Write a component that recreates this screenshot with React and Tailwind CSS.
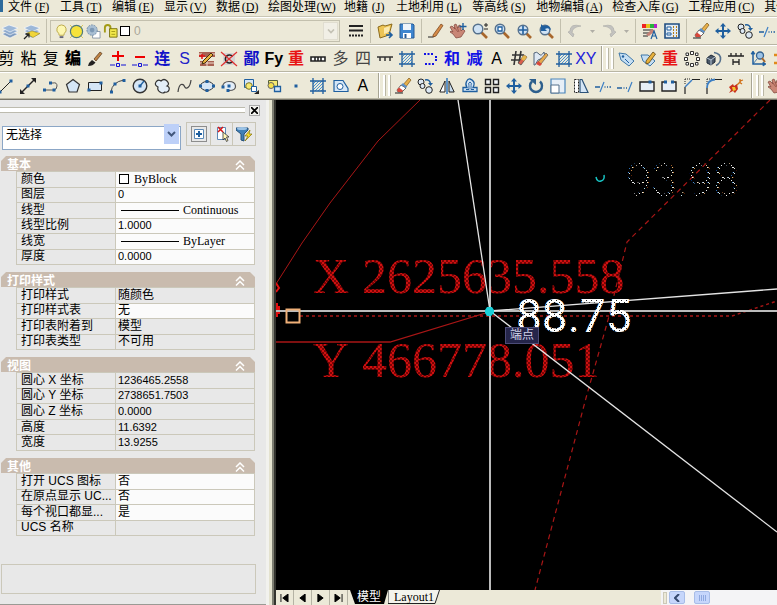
import React, { useState } from "react";

const menus = [
  ["文件", "F"],
  ["工具", "T"],
  ["编辑", "E"],
  ["显示", "V"],
  ["数据", "D"],
  ["绘图处理", "W"],
  ["地籍", "J"],
  ["土地利用", "L"],
  ["等高线", "S"],
  ["地物编辑", "A"],
  ["检查入库", "G"],
  ["工程应用", "C"],
  ["其他", "M"],
];

const B = "#1f5f9f";
const K = "#222";

// small square node used by most of the drawing tools
function Dot({ x, y }) {
  return <rect x={x - 1.5} y={y - 1.5} width="3" height="3" fill={B} />;
}

function Lens({ x = 6, y = 6, children }) {
  return (
    <>
      <path d={`M${x + 3.5} ${y + 3.5}L15 15`} stroke="#a8672c" strokeWidth="2.6" />
      <circle cx={x} cy={y} r="4.8" fill="#cfe2f4" stroke="#55708c" strokeWidth="1.4" />
      {children}
    </>
  );
}

const hatch = (
  <>
    <path d="M3 6L6 3M3 9L9 3M3 12L12 3M5 13L13 5M8 13L13 8M11 13L13 11" stroke="#4d93d0" />
    <path d="M0 3h16M0 13h16M3 0v16M13 0v16" stroke={B} strokeWidth="1.3" />
  </>
);
const eraser = (
  <>
    <path d="M0 15h8" stroke={K} />
    <path d="M7 8L14 0L16 2L10 10z" fill="#e8b04a" stroke="#7a5418" strokeWidth=".7" />
    <path d="M2 12L6 7L11 10L7 14H3z" fill="#fff" stroke="#444" strokeWidth=".8" />
    <path d="M2 12L4 9.500L8 12.500L7 14H3z" fill="#d9483b" />
    <path d="M6 7L8 5L12 8.500L11 10z" fill="#5b8fc8" />
  </>
);
const move = (
  <path
    d="M8 0l3 3.500H9V7h3.500V5L16 8l-3.500 3V9H9v3.500h2L8 16l-3-3.500h2V9H3.500v2L0 8l3.500-3v2H7V3.500H5z"
    fill={B}
  />
);
const copy = (
  <>
    <circle cx="4" cy="4" r="3" fill="#dce8f4" stroke={K} />
    <circle cx="5.500" cy="8" r="2.500" fill="#dce8f4" stroke={K} />
    <circle cx="12" cy="12" r="3.300" fill="#dce8f4" stroke={K} />
    <path d="M8 2q5-1 5.500 4" stroke={B} strokeWidth="1.500" fill="none" />
    <path d="M11 5h5l-2.500 3z" fill={B} />
  </>
);
const trim = (
  <>
    <path d="M0 9h5M12 9h1M14.500 9h1.500M9.500 9h1" stroke={B} strokeWidth="1.500" />
    <path d="M5 14L9 4" stroke="#3c7fc4" strokeWidth="1.200" />
  </>
);
const hand = (
  <>
    <path d="M2 3l3 3L4 2l2-1 2 4 1-3 2 1v5l2-2 2 2-4 6-5 1-3-4-3-2 1-1 2 1-3-5z" fill="#c98676" stroke="#7d4238" strokeWidth=".7" />
    <path d="M4 4l4 5M7 4l2 5" stroke="#8d4c42" strokeWidth=".7" />
  </>
);
const brush = (
  <>
    <path d="M7 8L13 1l2 1.500L9 10z" fill="#c08444" stroke="#53351a" strokeWidth=".7" />
    <path d="M1 15q1-4 4-6l3.500 2.500Q6 15 1 15z" fill="#222" />
  </>
);
const layers = (
  <>
    <path d="M0 11l7-3 9 3-8 4z" fill="#7f9cc0" stroke="#fff" strokeWidth=".6" />
    <path d="M0 8l7-3 9 3-8 4z" fill="#8eaacd" stroke="#fff" strokeWidth=".6" />
    <path d="M0 5l7-3 9 3-8 4z" fill="#9db8d8" stroke="#fff" strokeWidth=".6" />
  </>
);

const icons = {
  layers,
  layersPrev: (
    <>
      {layers}
      <path d="M2 10.500l6-2.500 8 2.500-7 4z" fill="#f0d53a" stroke="#8a7a14" strokeWidth=".5" />
      <path d="M0 16l5-5M1.500 11H5v3.500" stroke={K} strokeWidth="1.300" fill="none" />
    </>
  ),
  bulb: (
    <>
      <path d="M8 1a5 5 0 0 1 3 9l-.5 2h-5L5 10a5 5 0 0 1 3-9z" fill="#fdf7b0" stroke="#b9a64a" />
      <path d="M6 13h4v2H6z" fill="#667" />
    </>
  ),
  sun: (
    <>
      <path d="M1 1l3 3M15 1l-3 3M1 15l3-3M15 15l-3-3" stroke="#d7c64d" />
      <circle cx="8" cy="8" r="6.500" fill="#f6e33a" stroke="#4f7a7c" strokeWidth="1.300" />
    </>
  ),
  freeze: (
    <>
      <path d="M7 8h8v7H7z" fill="#fff" stroke="#8a98a8" />
      <circle cx="6.500" cy="6.500" r="5.500" fill="#a9bfd3" stroke="#6f8ba6" strokeDasharray="2 1" />
      <circle cx="6.500" cy="6.500" r="2.500" fill="#7d99b5" />
    </>
  ),
  lock: (
    <>
      <path d="M2 9V4q0-3 3-3t3 3v4" fill="none" stroke="#a39b16" strokeWidth="2" />
      <path d="M7 5h8v9H7z" fill="#f2e84a" stroke="#77700e" />
      <path d="M9 8h4M9 11h4" stroke="#a39b16" />
    </>
  ),
  lines: <path d="M1 3h14M1 7.500h14M1 12.500h2M4 12.500h2M7 12.500h2M10 12.500h2M13 12.500h2" stroke={K} strokeWidth="2" />,
  folder: (
    <>
      <path d="M1 4l5-2 2 1 7-2-3 11-9 3z" fill="#edc455" stroke="#8b6a1c" />
      <path d="M7 5l6-2-1 6-5 2z" fill="#fbe9ae" />
      <path d="M9 12h6M12 9l3 3-3 3" stroke={B} strokeWidth="1.600" fill="none" />
    </>
  ),
  save: (
    <>
      <path d="M1 1h13l1 1v13H1z" fill="#3f86cf" stroke="#265a96" />
      <path d="M4 1h8v6H4z" fill="#eef4fa" />
      <path d="M4 10h8v5H4z" fill="#fff" />
      <path d="M5.500 11h2v4h-2z" fill="#265a96" />
    </>
  ),
  pencil: (
    <>
      <path d="M0 14h5l3-2" stroke={K} fill="none" />
      <path d="M5 12L13 1l2 1.500L8 13l-3 1z" fill="#d58b49" stroke="#703e16" strokeWidth=".7" />
    </>
  ),
  pan: (
    <>
      {hand}
      <path d="M13 0v7M9.500 3.500h7" stroke={B} strokeWidth="1.400" />
    </>
  ),
  hand,
  zoomRt: (
    <>
      <Lens />
      <path d="M12 2h4M14 0v4M12 6h4" stroke={K} />
    </>
  ),
  zoomWin: <Lens><path d="M4 4h4v4H4z" fill="#fff" stroke={B} strokeWidth="1.300" /></Lens>,
  zoomAll: <Lens x={7} y={7}><path d="M7 3v8M3 7h8" stroke={B} strokeWidth="1.600" /></Lens>,
  zoomPrev: (
    <>
      <Lens x={7} y={7} />
      <path d="M3 1v7h6L7 6q3-2 6 1-1-6-8-4z" fill={B} />
    </>
  ),
  undo: <path d="M1 9l5 5 1-3-2-1q0-6 9-7Q3 0 3 8z" fill="#c3c2bf" stroke="#aaa9a6" strokeWidth=".6" />,
  redo: <path d="M15 9l-5 5-1-3 2-1q0-6-9-7 11-3 11 5z" fill="#c3c2bf" stroke="#aaa9a6" strokeWidth=".6" />,
  props: (
    <>
      <path d="M0 1h4v4H0z" fill="#e22" />
      <path d="M4 1h4v4H4z" fill="#e2c51c" />
      <path d="M8 1h4v4H8z" fill="#25b43b" />
      <path d="M12 1h3v4h-3z" fill="#b321c9" />
      <path d="M1 7h10M1 10h6M1 13h5" stroke={K} />
      <path d="M4 12l6-6 3 2-6 5z" fill="#c78176" />
      <path d="M9 16l3-8 3 8M10 13h4" stroke={B} strokeWidth="1.200" fill="none" />
    </>
  ),
  center: (
    <>
      <path d="M1 1h14v14H1z" fill="#dfeaf4" stroke="#1f4d80" strokeWidth="1.600" />
      <path d="M3 4h4v3H3zM3 10h4v2H3z" fill="#fff" stroke={B} />
      <path d="M9 4h1M12 4h1M9 7h1M12 7h1M9 10h1M12 10h1M9 13h1M12 13h1" stroke="#b67e16" strokeWidth="1.800" />
    </>
  ),
  eraser,
  move,
  copy,
  trim,
  brush,
  plus: (
    <>
      <path d="M8 0v10M2 5h12" stroke="#e00" strokeWidth="2" />
      <path d="M0 14h5M11 14h5" stroke="#1111d6" />
      <path d="M6.500 12.500h3v3h-3z" fill="none" stroke="#1111d6" />
    </>
  ),
  minus: (
    <>
      <path d="M3 6h10" stroke="#e00" strokeWidth="2" />
      <path d="M0 14h5M11 14h5" stroke="#1111d6" />
      <path d="M6.500 12.500h3v3h-3z" fill="none" stroke="#1111d6" />
    </>
  ),
  brick: (
    <>
      <path d="M0 1h16v5H0zM1 10h14v5H1z" fill="#a86152" />
      <path d="M0 3h3M13 3h3M8 10v5M1 12h14" stroke="#f0ded0" />
      <path d="M4 10L12 2l2 2-8 8-3 1z" fill="#e8b23d" stroke="#443010" />
      <path d="M0 5h6M3 3v5" stroke="#e01414" strokeWidth="1.500" />
    </>
  ),
  crossC: (
    <>
      <path d="M2 2h12v12H2z" fill="#d4d4d4" />
      <path d="M11.500 5.500A4 4 0 1 0 11.500 10.500" fill="none" stroke={K} strokeWidth="1.600" />
      <path d="M0 1l16 14M16 1L0 15" stroke="#e03030" strokeWidth="1.200" />
    </>
  ),
  scale: <path d="M1 6h14v4H1zM5 6v4M8 6v4M11 6v4" fill="#fff" stroke={K} strokeWidth="1.600" />,
  comb: <path d="M0 6h16M3 6v4M8 6v4M13 6v4" stroke="#333" strokeWidth="1.500" />,
  hatch,
  dotArrow: (
    <>
      <path d="M2 3h9M3 13h9" stroke="#1111e6" strokeWidth="2" strokeDasharray="2 1.500" />
      <path d="M14 5v6" stroke="#1111e6" strokeWidth="2" strokeDasharray="2 1" />
    </>
  ),
  hashPen: (
    <>
      <path d="M1 4h12M0 9h11M5 0L3 14M10 0L8 12" stroke="#333" strokeWidth="1.600" />
      <path d="M7 12l6-8 3 2-6 8z" fill="#d9604e" stroke="#444" strokeWidth=".7" />
      <path d="M10 8l3-4 3 2-3 4z" fill="#e6b84c" />
    </>
  ),
  polyPen: (
    <>
      <path d="M1 2q3-2 5 1t5-2l1 5-7 3-3 5H1z" fill="#dfe9f4" stroke="#53657a" />
      <path d="M5 11l8-9 2 2-7 9z" fill="#e6a84c" stroke="#555" strokeWidth=".7" />
      <path d="M3 13l2-3 4 3-2 2z" fill="#d9483b" />
    </>
  ),
  tag: (
    <>
      <path d="M1 2l7 1 8 7-5 5-8-6z" fill="#c5def2" stroke="#3f77a8" />
      <circle cx="5" cy="5.500" r="1.200" fill={B} />
      <path d="M7 8l4 4" stroke={B} />
    </>
  ),
  tagPen: (
    <>
      <path d="M1 4l7 0 7 6-5 5-7-5z" fill="#c5def2" stroke="#3f77a8" />
      <path d="M6 10l7-9 2.500 2L9 12l-3 1z" fill="#e8b23d" stroke="#5b4414" strokeWidth=".8" />
    </>
  ),
  ring: (
    <path d="M6.500.5h3v3h-3zM6.500 12.500h3v3h-3zM.5 6.500h3v3h-3zM12.500 6.500h3v3h-3zM2 2h2.500v2.500H2zM11.500 2H14v2.500h-2.500zM2 11.500h2.500V14H2zM11.500 11.500H14V14h-2.500z" fill="#fff" stroke="#333" />
  ),
  orbit: (
    <>
      <path d="M1 7l4-3 4 2v5l-4 3-4-2z" fill="#4b5868" stroke="#1d2836" />
      <path d="M1 7l4 2v5M5 9l4-3" stroke="#b8c8d8" fill="none" />
      <path d="M8 1.500q7 1 6.500 7-.5 4-4.500 6" fill="none" stroke="#55708c" strokeWidth="1.600" />
    </>
  ),
  span: <path d="M0 5h16M3 2v3M8 2v3M13 2v3M5 8v6M11 8v6M5 11h6" stroke={K} strokeWidth="1.300" fill="none" />,
  axes: (
    <>
      <path d="M3 1v12h12" stroke={B} strokeWidth="1.500" fill="none" />
      <path d="M1 3l2-3 2 3zM13 11l3 2-3 2zM3 13l4-5" fill={B} stroke={B} strokeWidth=".8" />
      <circle cx="10" cy="4.500" r="3.500" fill="#9cc3e6" stroke="#34618e" strokeWidth="1.300" />
      <path d="M12 7l3 4" stroke="#a8672c" strokeWidth="2" />
    </>
  ),
  list: <path d="M2 4h10M2 12h10" stroke="#e08a1c" strokeWidth="2.500" />,
  line: (
    <>
      <path d="M2 14L13 3" stroke={K} />
      <Dot x={2} y={14} />
      <Dot x={13} y={3} />
    </>
  ),
  xline: (
    <>
      <path d="M2 14L14 2" stroke={K} strokeWidth="1.400" />
      <path d="M0 16v-5l5 5zM16 0v5l-5-5z" fill={K} />
      <Dot x={8} y={8} />
    </>
  ),
  pline: (
    <>
      <path d="M1 12h9q4 0 4-4t-4-3H7" fill="none" stroke="#555" />
      <Dot x={1.500} y={12} />
      <Dot x={11} y={12} />
      <Dot x={7.500} y={5} />
    </>
  ),
  polygon: <path d="M8 1.500l6.500 5L12 14H4L1.500 6.500z" fill="#d5e6f6" stroke="#333" strokeWidth="1.200" />,
  rect: (
    <>
      <path d="M1.500 4.500h13v8h-13z" fill="#d5e6f6" stroke={K} />
      <Dot x={2} y={12} />
      <Dot x={14} y={5} />
    </>
  ),
  arc: (
    <>
      <path d="M1 14Q2 4 14 2" fill="none" stroke="#444" />
      <Dot x={1.500} y={14} />
      <Dot x={5} y={6} />
      <Dot x={14} y={2.500} />
    </>
  ),
  circle: (
    <>
      <circle cx="8" cy="8" r="6.800" fill="#d5e6f6" stroke="#333" strokeWidth="1.400" />
      <path d="M8 8l4-5" stroke={B} strokeWidth="1.300" />
      <Dot x={8} y={8} />
    </>
  ),
  cloud: (
    <path d="M4 9q-4-2-2-5t5-1q3-3 6 0t0 5q3 1 2 4t-4 2q-2 2-5 0t-2-5z" fill="#e3eef8" stroke="#333" strokeWidth="1.200" />
  ),
  spline: <path d="M1 14C2 5 6 5 7.500 8.500S13 10 14 2" fill="none" stroke="#444" strokeWidth="1.200" />,
  ellipse: (
    <>
      <ellipse cx="8" cy="8" rx="6.500" ry="4.500" fill="#d5e6f6" stroke="#333" />
      <Dot x={1.500} y={8} />
      <Dot x={14.500} y={8} />
      <Dot x={8} y={3.500} />
      <Dot x={8} y={12.500} />
    </>
  ),
  earc: (
    <>
      <path d="M1.500 9Q2 3.500 8 3.500T14.500 8 8 12.500" fill="#e3eef8" stroke="#555" strokeWidth="1.200" />
      <Dot x={2} y={9} />
      <Dot x={8} y={8} />
      <Dot x={7} y={12.500} />
    </>
  ),
  insert: (
    <>
      <path d="M1.500 1.500h9v8h-9z" fill="#d5e6f6" stroke={B} />
      <circle cx="6" cy="8" r="3.300" fill="#f6ea72" stroke="#7a7228" />
      <path d="M8.500 8.500h5v5h-5z" fill="#fff" stroke={B} />
      <path d="M11 16l5-4v4z" fill={K} />
    </>
  ),
  block: (
    <>
      <path d="M2.500 2.500h9v6h-9z" fill="#f6ea72" stroke="#55603c" />
      <circle cx="5" cy="7.500" r="3" fill="#f3e04c" stroke="#666" />
      <path d="M8.500 8.500h6v5h-6z" fill="#d5e6f6" stroke={B} strokeWidth="1.300" />
    </>
  ),
  point: <Dot x={8} y={8} />,
  region: (
    <>
      <path d="M1 2.500h9l5 8v3H1z" fill="#d5e6f6" stroke={B} strokeWidth="1.200" />
      <circle cx="7" cy="8.500" r="3" fill="#fff" stroke={B} />
    </>
  ),
  mirror: (
    <>
      <path d="M8 0v16" stroke="#3c7fc4" strokeWidth="1.600" />
      <path d="M6 3v11H.8z" fill="#fff" stroke={K} />
      <path d="M10 3v11h5.200z" fill="#c9dced" stroke={K} />
    </>
  ),
  offset: (
    <>
      <path d="M1 13.500v-4h4q-2-3-.5-6T8 1t3.500 2.500-.5 6h4v4z" fill="#d5e6f6" stroke={B} strokeWidth="1.300" />
      <path d="M4 11.500h3V7.500q-1-3 1-3.500 2 .5 1 3.500v4h3" stroke={B} fill="#f6f8fa" />
    </>
  ),
  array: <path d="M1.500 1.500h5v5h-5zM9.500 1.500h5v5h-5zM1.500 9.500h5v5h-5zM9.500 9.500h5v5h-5z" fill="#f3f6f8" stroke={K} strokeWidth="1.400" />,
  rotate: (
    <>
      <path d="M4 3.500A6 6 0 1 0 12 3.500" fill="none" stroke="#2d5f8d" strokeWidth="2.400" />
      <path d="M1 1h7v6z" fill="#2d5f8d" />
    </>
  ),
  resize: (
    <>
      <path d="M1 1h14v14H1z" fill="#e7eff7" stroke="#4b86bb" strokeWidth="1.200" />
      <path d="M1 7h8v8H1z" fill="#fff" stroke="#55708c" />
    </>
  ),
  stretch: (
    <>
      <path d="M1.500 1.500h4v13h-4z" fill="#fff" stroke={K} strokeDasharray="2 1" />
      <path d="M7 1.500h2l6 13H7z" fill="#d5e6f6" stroke="#2c5278" strokeWidth="1.200" />
    </>
  ),
  extend: (
    <>
      <path d="M0 10h5M6.500 10h1M9 10h1" stroke={B} strokeWidth="1.500" />
      <path d="M11 14L15 4" stroke="#3c7fc4" strokeWidth="1.200" />
    </>
  ),
  breakPt: (
    <>
      <path d="M1 4h14v9H1z" fill="#e7eff7" stroke={K} strokeWidth="1.400" />
      <Dot x={11} y={4} />
    </>
  ),
  breakGap: (
    <>
      <path d="M4 4H1v9h14V4h-3" fill="#e7eff7" stroke={K} strokeWidth="1.400" />
      <Dot x={4.500} y={4} />
      <Dot x={11.500} y={4} />
    </>
  ),
  chamfer: (
    <>
      <path d="M1 16V9M8 1.500h8" stroke={K} strokeWidth="1.200" />
      <path d="M1 1h6M1 1v6" stroke={K} strokeDasharray="1 1" />
      <path d="M1 9l7-7" stroke="#3c7fc4" strokeWidth="1.400" />
    </>
  ),
  fillet: (
    <>
      <path d="M1 16V10M9 1.500h7" stroke={K} strokeWidth="1.200" />
      <path d="M1 1h6M1 1v6" stroke={K} strokeDasharray="1 1" />
      <path d="M1 10q0-8 8-8.500" stroke="#3c7fc4" strokeWidth="1.800" fill="none" />
    </>
  ),
  explode: (
    <>
      <path d="M1 9l4-3 1 2 3-2 1 5-3 4-2-2-4 2 2-3z" fill="#c9301c" />
      <path d="M4 9l3 0 1 3-3 1z" fill="#f2c52c" />
      <path d="M9 7l4-4M12 1v3M15 2l-3 1M14 6l-3-2" stroke="#d07018" strokeWidth="1.300" />
    </>
  ),
};

const row2 = [
  { t: "剪" }, { t: "粘" }, { t: "复" },
  { t: "编", c: "font-black" },
  "brush", "plus", "minus",
  { t: "连", c: "text-[#1111c8] font-bold" },
  { t: "S", c: "text-[#2222c8]" },
  "brick", "crossC",
  { t: "鄙", c: "text-[#1111c8] font-bold" },
  { t: "Fy", c: "font-black" },
  { t: "重", c: "text-[#e81414] font-bold" },
  "scale",
  { t: "多", c: "text-[#444]" },
  { t: "四", c: "text-[#444]" },
  "comb", "hatch", "dotArrow",
  { t: "和", c: "text-[#1111e6] font-bold" },
  { t: "减", c: "text-[#1111e6] font-bold" },
  { t: "A" },
  "hashPen", "polyPen", "hatch",
  { t: "XY", c: "text-[#2222d8]" },
];
const row2b = ["tag", "tagPen", { t: "重", c: "text-[#e81414] font-bold" }, "ring", "orbit", "span", "axes", "list"];
const row3 = [
  "line", "xline", "pline", "polygon", "rect", "arc", "circle", "cloud", "spline",
  "ellipse", "earc", "insert", "block", "point", "hatch", "region", { t: "A" },
];
const row3b = [
  "eraser", "copy", "mirror", "offset", "array", "move", "rotate", "resize",
  "stretch", "trim", "extend", "breakPt", "breakGap", "chamfer", "fillet", "explode",
];

const sections = [
  {
    title: "基本",
    height: "h-[94px]",
    rows: [
      ["颜色", "ByBlock", true, "swatch"],
      ["图层", "0", true],
      ["线型", "Continuous", true, "line"],
      ["线型比例", "1.0000", true],
      ["线宽", "ByLayer", true, "line"],
      ["厚度", "0.0000", true],
    ],
  },
  {
    title: "打印样式",
    height: "h-[63px]",
    rows: [
      ["打印样式", "随颜色", false],
      ["打印样式表", "无", true],
      ["打印表附着到", "模型", false],
      ["打印表类型", "不可用", false],
    ],
  },
  {
    title: "视图",
    height: "h-[79px]",
    rows: [
      ["圆心 X 坐标", "1236465.2558", false],
      ["圆心 Y 坐标", "2738651.7503", false],
      ["圆心 Z 坐标", "0.0000", false],
      ["高度", "11.6392", false],
      ["宽度", "13.9255", false],
    ],
  },
  {
    title: "其他",
    height: "h-[63px]",
    rows: [
      ["打开 UCS 图标", "否", true],
      ["在原点显示 UC...", "否", true],
      ["每个视口都显...", "是", true],
      ["UCS 名称", "", false],
    ],
  },
];

function Icon({ name, size = 16 }) {
  return (
    <svg width={size} height={size} viewBox="0 0 16 16" fill="none" className="shrink-0 overflow-visible">
      {icons[name]}
    </svg>
  );
}

function Tool({ item, grow }) {
  const isText = typeof item !== "string";
  return (
    <button
      aria-label={isText ? item.t : item}
      className={`flex h-6 items-center justify-center ${grow ? "min-w-0 flex-1" : "w-[22px] shrink-0"}`}
    >
      {isText ? (
        <span className={`whitespace-nowrap text-[16px] leading-5 ${item.c || ""}`}>{item.t}</span>
      ) : (
        <Icon name={item} />
      )}
    </button>
  );
}

function Sep() {
  return <div className="mx-[3px] h-6 w-px shrink-0 bg-[#c3c0ae]" />;
}

// end of one toolbar and the grip of the next one
function Grip() {
  return (
    <div className="flex w-[18px] shrink-0 items-stretch self-stretch pl-1">
      <div className="w-[2px] border-r border-white bg-[#a8a594]" />
      <div className="my-[2px] ml-[3px] w-[3px] border-r border-[#b9b6a4] bg-white" />
      <div className="my-[2px] ml-[2px] w-[3px] border-r border-[#b9b6a4] bg-white" />
    </div>
  );
}

function Caret() {
  return (
    <button aria-label="more" className="flex h-6 w-3 shrink-0 items-center justify-center">
      <svg width="5" height="3" viewBox="0 0 5 3"><path d="M0 0h5L2.500 3z" fill="#b0aea6" /></svg>
    </button>
  );
}

function Section({ title, height, rows }) {
  const [open, setOpen] = useState(true);
  return (
    <section className="mb-[7px]">
      <button
        onClick={() => setOpen(!open)}
        className="flex h-[15px] w-full items-center justify-between bg-[#c9bbae] pt-[3px] pr-[10px] pl-[6px] [clip-path:polygon(5px_0,calc(100%-5px)_0,100%_5px,100%_100%,0_100%,0_5px)]"
      >
        <span className="text-[12px] leading-[15px] font-bold text-white">{title}</span>
        <svg width="10" height="10" viewBox="0 0 10 10" fill="none" stroke="#fff" strokeWidth="1.500">
          <path d="M1 5l4-4 4 4M1 9.500l4-4 4 4" />
        </svg>
      </button>
      {open && (
        <div className="pl-[15px]">
          <table className={`w-full table-fixed border-collapse ${height}`}>
            <colgroup>
              <col className="w-[99px]" />
              <col />
            </colgroup>
            <tbody>
              {rows.map(([label, value, editable, kind]) => (
                <tr key={label}>
                  <th className="border border-[#cbc8ba] p-0 pl-1 text-left font-normal">
                    <div className="text-[12px] leading-[13px] whitespace-nowrap">{label}</div>
                  </th>
                  <td className={`border border-[#cbc8ba] p-0 pl-[2px] ${editable ? "bg-[#fbfbfb]" : ""}`}>
                    <div className="flex items-center leading-[13px]">
                      {kind === "swatch" && <span className="mr-[5px] ml-px size-[10px] border border-black bg-white" />}
                      {kind === "line" && <span className="mr-[4px] ml-[3px] h-px w-[58px] bg-black" />}
                      {kind ? (
                        <span className="font-['Liberation_Serif','Noto_Sans_CJK_SC',serif] text-[12px] leading-[13px] font-medium">{value}</span>
                      ) : (
                        <span className={/^[\d.]+$/.test(value) ? "text-[11px]" : "text-[12px]"}>{value}</span>
                      )}
                    </div>
                  </td>
                </tr>
              ))}
            </tbody>
          </table>
        </div>
      )}
    </section>
  );
}

function Palette() {
  return (
    <aside className="flex w-[276px] shrink-0 bg-[#e8e8e8]">
      <div className="flex min-w-0 flex-1 flex-col border-b border-[#9a9a94] pr-[6px]">
        <div className="flex h-[22px] shrink-0 items-center gap-1 pb-[2px]">
          <div className="h-[6px] flex-1 border-y border-[#bdbbae] bg-white" />
          <button aria-label="close" className="flex size-[11px] items-center justify-center border border-[#aaa] bg-[#f2f2ee]">
            <svg width="7" height="7" viewBox="0 0 7 7"><path d="M0 0l7 7M7 0L0 7" stroke="#000" strokeWidth="1.700" /></svg>
          </button>
        </div>
        <div className="flex items-center pl-[2px]">
          <div className="relative h-6 w-[179px]">
            <select
              aria-label="选择"
              className="h-6 w-full appearance-none border border-[#8ba6c6] bg-white px-[3px] pb-[5px] text-[12px] leading-4"
            >
              <option>无选择</option>
            </select>
            <span className="pointer-events-none absolute top-[2px] right-[2px] flex h-5 w-[15px] items-center justify-center bg-[#bdd0f8]">
              <svg width="9" height="6" viewBox="0 0 9 6"><path d="M1 1l3.500 3.500L8 1" stroke="#42577c" strokeWidth="2" fill="none" /></svg>
            </span>
          </div>
          <div className="ml-[5px] flex border border-[#c9c6b8]">
            <button aria-label="pickadd" className="flex h-[22px] w-[23px] items-center justify-center">
              <svg width="16" height="16" viewBox="0 0 16 16" fill="none">
                <path d="M.5.5h15v15H.5z" stroke="#333" strokeDasharray="1 1" />
                <path d="M3.500 3.500h9v9h-9z" fill="#fff" stroke="#5b88b6" />
                <path d="M8 5v6M5 8h6" stroke={B} strokeWidth="2" />
              </svg>
            </button>
            <button aria-label="pick" className="flex h-[22px] w-[23px] items-center justify-center border-x border-[#c9c6b8]">
              <svg width="16" height="16" viewBox="0 0 16 16" fill="none">
                <path d="M3.500 1.500h8v12h-8z" fill="#fff" stroke="#5b88b6" />
                <path d="M4 1l5 5M9 1L4 6" stroke="#d81414" strokeWidth="1.500" />
                <path d="M9 6v8l2-2 1.500 3.500 1.500-1L12.500 11H15z" fill="#fff7b8" stroke="#333" strokeWidth=".8" />
              </svg>
            </button>
            <button aria-label="filter" className="flex h-[22px] w-[22px] items-center justify-center">
              <svg width="16" height="16" viewBox="0 0 16 16" fill="none">
                <path d="M0 2h12v2L8 8v7l-3-1V8L0 4z" fill="#3f7fb6" stroke="#24507a" />
                <ellipse cx="6" cy="2.500" rx="5" ry="1.500" fill="#9cc3e6" />
                <path d="M14 4l-5 6h3l-3 5 7-7h-3z" fill="#f5dc2e" stroke="#85730c" strokeWidth=".7" />
              </svg>
            </button>
          </div>
        </div>
        <div className="mt-[10px] mr-1 pr-px pl-[1px]">
          {sections.map((s) => (
            <Section key={s.title} {...s} />
          ))}
        </div>
        <div className="mt-auto mr-1 mb-[10px] ml-[1px] h-[30px] border border-[#cbc8ba]" />
      </div>
      <div className="w-[3px] bg-[#f2f2ee]" />
      <div className="w-[3px] bg-[#e4e2cf]" />
      <div className="w-[2px] bg-[#7e7e72]" />
      <div className="w-[2px] bg-[#33332e]" />
    </aside>
  );
}

function Drawing() {
  return (
    <div className="relative min-h-0 flex-1 overflow-hidden bg-black">
      <svg className="absolute inset-0 size-full" fill="none">
        <defs>
          <pattern id="dither" width="4" height="4" patternUnits="userSpaceOnUse">
            <rect width="4" height="4" fill="#7c0404" />
            <path d="M0 0h2v2H0zM2 2h2v2H2z" fill="#d01010" />
          </pattern>
          <pattern id="rough" width="5" height="4" patternUnits="userSpaceOnUse">
            <rect width="5" height="4" fill="#fff" />
            <path d="M0 0h1v1H0zM3 2h1v1H3z" fill="#222" />
          </pattern>
          <pattern id="sparse" width="5" height="5" patternUnits="userSpaceOnUse">
            <path d="M0 0h1v1H0zM1 2h2v1H1zM3 3h1v1H3z" fill="#e8e8e8" />
          </pattern>
        </defs>
        <g fill="url(#dither)" className="font-['Liberation_Serif',serif] text-[50px]">
          <text x="37" y="193">X</text>
          <text x="86" y="193">2625635.558</text>
          <text x="37" y="277">Y</text>
          <text x="86" y="277">466778.051</text>
        </g>
        <g stroke="#a81616">
          <path d="M144 0L102 41L54 103L26 143L0 184" />
          <path d="M0 242H114L213 212" strokeWidth="1.300" />
          <path d="M24 216H456L501 201" strokeDasharray="3 3" strokeWidth="1.400" />
          <path d="M494 0L351 142L332 220L310 298L259 490" strokeDasharray="5 4" strokeWidth="1.200" />
          <path d="M0 183l3 5-3 4M1 203v14M3 206v8" strokeWidth="2" stroke="#e01010" />
        </g>
        <path d="M214 0V490" stroke="#bbb" strokeWidth="2" />
        <path d="M0 211H2000" stroke="#bbb" strokeWidth="2" />
        <g stroke="#e4e4e4" strokeWidth="1.300">
          <path d="M182 0L214 211L501 189" />
          <path d="M214 211L501 432" />
        </g>
        <text x="240" y="232" fill="url(#rough)" className="font-['Roboto','Liberation_Sans',sans-serif] text-[46px] font-normal">88.75</text>
        <text x="350" y="96" fill="url(#sparse)" className="font-['Roboto','Liberation_Sans',sans-serif] text-[46px] font-light">93.98</text>
        <path d="M320 77q1 5 5 4t3-6" stroke="#18c4c4" strokeWidth="1.500" />
        <path d="M10.500 209.500h13v13h-13z" stroke="#f0b078" strokeWidth="2" />
        <path d="M211 207h5l2 3v3l-3 3h-4l-2-3v-3z" fill="#18d0d8" />
      </svg>
      <div className="absolute top-[227px] left-[229px] border border-[#4c4c78] bg-[#25254a] px-1 text-[12px] leading-[15px] text-[#d4d4ea]">
        端点
      </div>
    </div>
  );
}

function LayoutBar() {
  const nav = ["M1 0v9M9 0L3 4.500L9 9z", "M8 0L2 4.500L8 9z", "M2 0l6 4.500L2 9z", "M9 0v9M1 0l6 4.500L1 9z"];
  return (
    <div className="flex h-[15px] shrink-0 items-stretch bg-[#ece9d8]">
      {nav.map((d) => (
        <button key={d} aria-label="tab scroll" className="flex w-[18px] items-center justify-center border-r border-[#b5b3a4]">
          <svg width="9" height="8" viewBox="0 0 10 9"><path d={d} fill="#000" stroke="#000" /></svg>
        </button>
      ))}
      <button className="ml-[2px] flex h-[14px] w-[38px] items-center justify-center bg-black text-[12px] leading-[14px] text-white [clip-path:polygon(0_0,100%_0,calc(100%-4px)_100%,5px_100%)]">
        模型
      </button>
      <button className="relative flex h-[14px] w-[52px] items-center justify-center font-['Liberation_Serif',serif] text-[12px] leading-[14px]">
        <svg className="absolute inset-0 size-full" viewBox="0 0 52 14" preserveAspectRatio="none">
          <path d="M0 0L0 13.500H47L51.500 0" fill="#f4f3ec" stroke="#222" />
        </svg>
        <span className="relative">Layout1</span>
      </button>
      <div className="flex-1" />
      <div className="flex w-[116px] items-center bg-[#f4f4f6]">
        <div className="mx-[2px] h-3 w-1 border border-[#ccc9b8] bg-[#ece9d8]" />
        <button aria-label="scroll left" className="flex h-[13px] w-4 items-center justify-center rounded-xs border border-[#a8bde8] bg-[#c6d6fb]">
          <svg width="6" height="8" viewBox="0 0 6 8"><path d="M5 0L1 4l4 4" stroke="#35496e" strokeWidth="2" fill="none" /></svg>
        </button>
        <div className="ml-[9px] flex h-[13px] w-4 items-center justify-center gap-px rounded-xs border border-[#a8bde8] bg-[#c6d6fb]">
          <i className="h-[6px] w-px bg-[#8fa9e0]" />
          <i className="h-[6px] w-px bg-[#8fa9e0]" />
          <i className="h-[6px] w-px bg-[#8fa9e0]" />
          <i className="h-[6px] w-px bg-[#8fa9e0]" />
        </div>
      </div>
    </div>
  );
}

export default function App() {
  const bar = "flex shrink-0 items-center overflow-hidden border-b border-[#b9b6a4] border-t border-t-white";
  return (
    <div className="flex h-screen w-full flex-col overflow-hidden bg-[#ece9d8] font-['Liberation_Sans','Noto_Sans_CJK_SC',sans-serif] text-black">
      <nav className="flex h-[17px] shrink-0 items-start overflow-hidden border-b border-[#c9c6b4]">
        <span className="mr-[5px] h-3 w-[3px] shrink-0 bg-[#2c6a9c]" />
        {menus.map(([name, key]) => (
          <button key={name} className="mr-2 flex shrink-0 items-center text-[12px] leading-[14px] whitespace-nowrap">
            {name}
            <span className="w-5 text-center font-['Liberation_Serif',serif]">
              (<u>{key}</u>)
            </span>
          </button>
        ))}
      </nav>

      {/* layers / standard */}
      <div className={`${bar} h-7`}>
        <div className="-ml-px flex shrink-0">
          <Tool item="layers" />
          <Tool item="layersPrev" />
        </div>
        <Sep />
        <div className="mr-[5px] flex h-[22px] w-[290px] shrink-0 items-center border border-[#c3c0ae] pl-[3px]">
          <Icon name="bulb" size={15} />
          <Icon name="sun" size={15} />
          <span className="w-[2px]" />
          <Icon name="freeze" size={15} />
          <span className="w-[2px]" />
          <Icon name="lock" size={15} />
          <span className="ml-[2px] size-[10px] border border-black bg-white" />
          <select aria-label="图层" disabled className="h-5 flex-1 appearance-none bg-transparent pl-1 text-[12px] leading-4 text-[#aaa799]">
            <option>0</option>
          </select>
          <span className="mr-px flex h-[18px] w-[15px] items-center justify-center border border-[#e0ddd0] bg-[#f1efe6]">
            <svg width="8" height="5" viewBox="0 0 8 5"><path d="M1 .5l3 3 3-3" stroke="#c3c1b4" strokeWidth="1.700" fill="none" /></svg>
          </span>
        </div>
        <Tool item="lines" />
        <Sep />
        <Tool item="folder" />
        <Tool item="save" />
        <Sep />
        {["pencil", "pan", "zoomRt", "zoomWin", "zoomAll", "zoomPrev"].map((n) => (
          <Tool key={n} item={n} />
        ))}
        <Sep />
        <Tool item="undo" />
        <Caret />
        <Tool item="redo" />
        <Caret />
        <Sep />
        <Tool item="props" />
        <Tool item="center" />
        <Sep />
        {["eraser", "move", "copy", "trim"].map((n) => (
          <Tool key={n} item={n} />
        ))}
      </div>

      {/* survey tools */}
      <div className={`${bar} h-[27px]`}>
        <div className="-ml-[5px] flex min-w-0 flex-1">
          {row2.map((it, i) => (
            <Tool key={i} item={it} grow />
          ))}
        </div>
        <Grip />
        <div className="flex w-[162px] shrink-0 overflow-hidden">
          {row2b.map((it, i) => (
            <Tool key={i} item={it} />
          ))}
        </div>
      </div>

      {/* draw / modify */}
      <div className={`${bar} h-[27px]`}>
        <div className="-ml-[5px] flex w-[379px] shrink-0">
          {row3.map((it, i) => (
            <Tool key={i} item={it} grow />
          ))}
        </div>
        <Grip />
        <div className="flex min-w-0 flex-1">
          {row3b.map((it, i) => (
            <Tool key={i} item={it} grow />
          ))}
        </div>
        <Grip />
        <div className="flex w-3 shrink-0 overflow-hidden">
          <Tool item="hand" />
        </div>
      </div>

      <div className="flex min-h-0 flex-1 border-t border-[#77756a]">
        <Palette />
        <main className="flex min-w-0 flex-1 flex-col">
          <Drawing />
          <LayoutBar />
        </main>
      </div>
    </div>
  );
}
